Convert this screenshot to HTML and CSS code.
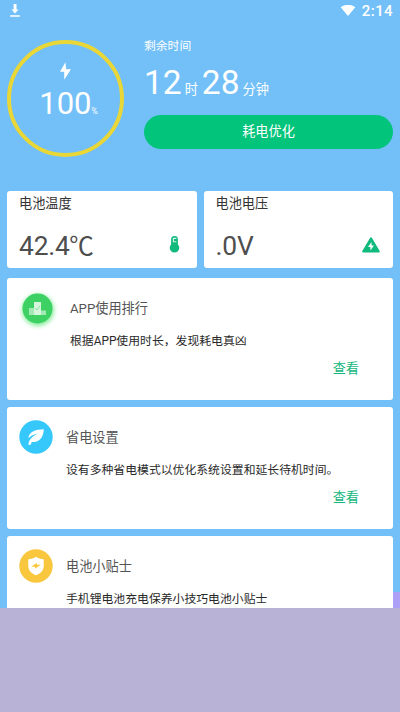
FILE: index.html
```html
<!DOCTYPE html>
<html lang="zh-CN">
<head>
<meta charset="utf-8">
<title>电池</title>
<link rel="stylesheet" href="styles.css">
</head>
<body>
<div class="screen">
  <header class="status">
    <svg class="download" width="10" height="14" viewBox="0 0 10 14"><path fill="#fff" d="M3.6 0h2.9v5.5h2L5 9.5 1.5 5.5h2.1zM.2 11.2h9.6v1.6H.2z"/></svg>
    <div class="status-right">
      <svg width="16" height="13" viewBox="0 0 16 13"><path fill="#fff" d="M.7 2.2C4.8-.9 11.2-.9 15.3 2.2L8 11z"/></svg>
      <span class="clock">2:14</span>
    </div>
  </header>
  <section class="summary">
    <div class="ring">
      <svg class="bolt" width="11" height="18" viewBox="0 0 11 18"><path fill="#fff" d="M5.4.2 0 9.8h4.2v8L11 7.2H6.2z"/></svg>
      <div class="level"><span class="level-num">100</span><span class="percent">%</span></div>
    </div>
    <div class="remain">
      <div class="remain-label">剩余时间</div>
      <div class="time"><span class="num">12</span><span class="unit">时</span><span class="num">28</span><span class="unit">分钟</span></div>
      <button class="optimize">耗电优化</button>
    </div>
  </section>
  <section class="stats">
    <div class="stat">
      <div class="stat-label">电池温度</div>
      <div class="stat-row"><span class="stat-value">42.4<span class="degree">℃</span></span>
        <svg class="thermo" width="11" height="20" viewBox="0 0 12 20"><path fill="#10b97c" d="M2.3 4a3.7 3.7 0 0 1 7.4 0v5.4a5.2 5.2 0 1 1-7.4 0z"/><path fill="none" stroke="#d4f3e8" stroke-width="1.2" d="M8 2.8H4.8v3.6H8"/></svg>
      </div>
    </div>
    <div class="stat">
      <div class="stat-label">电池电压</div>
      <div class="stat-row"><span class="stat-value">.0V</span>
        <svg class="volt" width="18" height="16" viewBox="0 0 18 16"><path fill="#10b97c" stroke="#10b97c" stroke-width="2" stroke-linejoin="round" d="M9 1.3 1.2 14.5h15.6z"/><path fill="#fff" d="M9.5 5 6 10h2.4v3.4L12 8.6H9.6z"/></svg>
      </div>
    </div>
  </section>
  <main class="cards">
    <article class="card rank">
      <svg class="icon" width="42" height="42" viewBox="0 0 42 42"><circle class="glow" cx="20" cy="20" r="16" fill="#8bed9f"/><circle cx="19.5" cy="18.5" r="15" fill="#3dd163"/><path fill="#a3e9b3" d="M11 18h5v7h-5zM23 20.5h5V25h-5z"/><path fill="#d5f6dc" d="M16 12h7v13h-7z"/><path fill="none" stroke="#91dfa5" d="m17 18 2 2 3-4"/></svg>
      <div class="body"><h2>APP使用排行</h2><p>根据APP使用时长，发现耗电真凶</p><a class="view">查看</a></div>
    </article>
    <article class="card">
      <svg class="icon" width="34" height="34" viewBox="0 0 34 34"><circle cx="17" cy="17" r="16.7" fill="#36c8fa"/><path fill="#fff" d="M24.8 9.3C17 9.4 9.8 11.5 9.4 18.3c2.7-2.7 6-4 9.8-4.7-4.7 2-8.6 5.2-9.7 9.8-.4 1.7 2 2.3 2.5.6l.7-2.1c7.8 1.2 12-5.2 12.1-12.6z"/></svg>
      <div class="body"><h2>省电设置</h2><p>设有多种省电模式以优化系统设置和延长待机时间。</p><a class="view">查看</a></div>
    </article>
    <article class="card">
      <svg class="icon" width="34" height="34" viewBox="0 0 34 34"><circle cx="17" cy="17" r="16.7" fill="#f8c73e"/><path fill="#fff" d="M17 7.8c2.2 1.6 4.6 2.2 7.7 2.5v6.5c0 4.8-3.2 7.7-7.7 9.5-4.5-1.8-7.7-4.7-7.7-9.5v-6.5c3.1-.3 5.5-.9 7.7-2.5z"/><path fill="#f8c73e" d="m18.2 13.7-6.2 4h4.1l-.3 2 6.2-4h-4.1z"/></svg>
      <div class="body"><h2>电池小贴士</h2><p>手机锂电池充电保养小技巧电池小贴士</p></div>
    </article>
  </main>
  <div class="edge"></div>
  <footer class="banner"></footer>
</div>
</body>
</html>
```
FILE: styles.css
```css
* { box-sizing: border-box; }
body { margin: 0; font-family: Roboto, "Noto Sans CJK SC", sans-serif; }
.screen { position: relative; width: 400px; height: 712px; overflow: hidden; background: #73c0f8; display: flex; flex-direction: column; }
svg { display: block; flex: none; }
.status { height: 40px; flex: none; display: flex; justify-content: space-between; padding: 4px 7px 0 10px; color: #fff; }
.status-right { display: flex; height: 14px; align-items: center; gap: 6px; }
.clock { font-size: 15px; font-weight: 500; line-height: 14px; letter-spacing: .4px; }
.summary { height: 151px; flex: none; display: flex; padding: 0 7px; gap: 20px; color: #fff; }
.ring { width: 117px; height: 117px; border: 4px solid #e9d637; border-radius: 50%; display: flex; flex-direction: column; align-items: center; padding-top: 18px; }
.level { display: flex; align-items: baseline; margin: 7px 0 0 6px; line-height: 34px; }
.level-num { font-size: 31px; }
.percent { font-size: 8.5px; }
.remain { width: 249px; }
.remain-label { font-size: 11.8px; line-height: 14px; margin-top: -1px; }
.time { display: flex; align-items: baseline; height: 62px; padding-top: 10px; line-height: 40px; }
.num { font-size: 33.5px; }
.unit { font-size: 13.2px; margin: 0 4px 0 3px; }
.optimize { width: 249px; height: 34px; display: block; padding: 0; border: 0; border-radius: 17px; background: #02c47b; color: #fff; font: 13.2px/34px Roboto, "Noto Sans CJK SC", sans-serif; }
.stats { display: flex; gap: 7px; padding: 0 7px; height: 77px; flex: none; }
.stat { flex: 1; background: #fff; border-radius: 3px; padding: 4px 12px 0; }
.stat-label { font-size: 13.2px; line-height: 18px; color: #333; }
.stat-row { display: flex; justify-content: space-between; align-items: center; height: 34px; margin-top: 16px; }
.stat-value { font-size: 26.4px; line-height: 34px; color: #4e4e4e; letter-spacing: -.2px; }
.degree { font-size: 24.5px; margin-left: -.5px; }
.thermo { margin: -2px 5px 0 0; }
.volt { margin: -2px 1px 0 0; }
.cards { display: flex; flex-direction: column; gap: 7px; padding: 10px 7px 0; height: 340px; flex: none; overflow: hidden; }
.card { height: 122px; flex: none; background: #fff; border-radius: 3px; display: flex; padding: 13px 12px 0; gap: 13px; }
.rank { padding-left: 11px; padding-top: 12px; gap: 10px; }
.rank .body { padding-top: 1px; }
.glow { filter: blur(2px); }
.body { flex: 1; }
h2 { margin: 8px 0 0; font-size: 13.2px; font-weight: 400; line-height: 20px; color: #555; }
p { margin: 14px 0 0; font-size: 11.85px; line-height: 16px; color: #292929; white-space: nowrap; }
.view { display: block; margin: 10px 22px 0 0; text-align: right; font-size: 13.2px; line-height: 20px; color: #13b67c; }
.banner { height: 104px; flex: none; background: #b9b2d7; }
.edge { position: absolute; left: 393px; top: 592px; width: 7px; height: 16px; background: #aaa0f5; }
```
